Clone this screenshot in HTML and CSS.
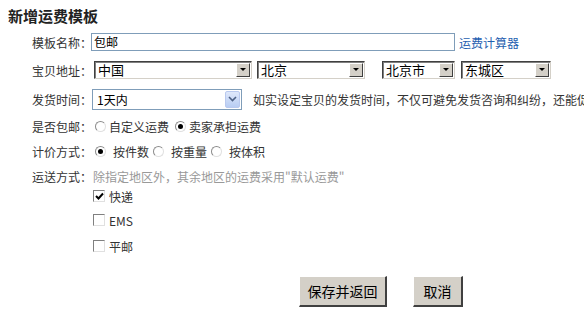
FILE: index.html
```html
<!DOCTYPE html>
<html lang="zh-CN">
<head>
    <meta charset="UTF-8">
    <title>新增运费模板</title>
    <link rel="stylesheet" href="styles.css">
</head>
<body>

    <div class="title">新增运费模板</div>

    <div class="row r1">
        <div class="label">模板名称：</div>
        <div class="text-input">包邮</div>
        <a class="calc" href="#">运费计算器</a>
    </div>

    <div class="row r2">
        <div class="label">宝贝地址：</div>
        <div class="sel s-country"><span>中国</span><i class="arrow"></i></div>
        <div class="sel s-prov"><span>北京</span><i class="arrow"></i></div>
        <div class="sel s-city"><span>北京市</span><i class="arrow"></i></div>
        <div class="sel s-area"><span>东城区</span><i class="arrow"></i></div>
    </div>

    <div class="row r3">
        <div class="label">发货时间：</div>
        <div class="xp-sel"><span>1天内</span><i class="xp-arrow"><svg width="9" height="6" viewBox="0 0 9 6"><path d="M1 1 L4.5 4.5 L8 1" fill="none" stroke="#4d6185" stroke-width="1.6"/></svg></i></div>
        <div class="hint">如实设定宝贝的发货时间，不仅可避免发货咨询和纠纷，还能促进成交！</div>
    </div>

    <div class="row r4">
        <div class="label">是否包邮：</div>
        <span class="radio"></span><span class="opt">自定义运费</span>
        <span class="radio on"></span><span class="opt">卖家承担运费</span>
    </div>

    <div class="row r5">
        <div class="label">计价方式：</div>
        <span class="radio on"></span><span class="opt wide">按件数</span>
        <span class="radio"></span><span class="opt wide">按重量</span>
        <span class="radio"></span><span class="opt wide">按体积</span>
    </div>

    <div class="row r6">
        <div class="label">运送方式：</div>
        <span class="note">除指定地区外，其余地区的运费采用"默认运费"</span>
    </div>

    <div class="checks">
        <div class="check-row c1"><span class="box on"><svg width="9" height="9" viewBox="0 0 9 9"><path d="M1 4 L3.5 6.5 L8 1.5" fill="none" stroke="#000" stroke-width="2"/></svg></span>快递</div>
        <div class="check-row c2"><span class="box"></span>EMS</div>
        <div class="check-row c3"><span class="box"></span>平邮</div>
    </div>

    <div class="actions">
        <button class="btn btn-save">保存并返回</button>
        <button class="btn btn-cancel">取消</button>
    </div>

</body>
</html>
```

FILE: styles.css
```css
body {
    margin: 0;
    padding: 8px;
    background-color: #fff;
    color: #333;
    font-family: "Noto Sans CJK SC", "Liberation Sans", sans-serif;
    font-size: 12px;
    overflow: hidden;
    white-space: nowrap;
}

.title {
    font-size: 15px;
    font-weight: bold;
    line-height: 16px;
    color: #222;
    margin-bottom: 4px;
}

.row {
    display: flex;
    align-items: center;
    height: 26px;
}

.row > * {
    flex-shrink: 0;
}

.r1, .r2 {
    height: 28px;
}

.r3 {
    height: 30px;
}

.r4 {
    height: 24px;
}

.r6 {
    height: 24px;
}

.label {
    width: 84px;
    text-align: right;
    color: #333;
}

/* text input */
.text-input {
    box-sizing: border-box;
    width: 364px;
    height: 18px;
    line-height: 16px;
    margin-left: -1px;
    padding-left: 2px;
    border: 1px solid #7f9db9;
    color: #000;
}

.calc {
    margin-left: 4px;
    color: #1f5fb0;
    text-decoration: none;
}

/* classic select */
.sel {
    box-sizing: border-box;
    display: flex;
    align-items: center;
    height: 18px;
    border-top: 1px solid #404040;
    border-left: 1px solid #404040;
    border-right: 1px solid #d4d0c8;
    border-bottom: 1px solid #d4d0c8;
    box-shadow: inset 1px 1px 0 #808080;
    color: #000;
    font-size: 13px;
}

.sel span {
    flex: 1;
    padding-left: 3px;
    line-height: 16px;
}

.arrow {
    position: relative;
    width: 14px;
    height: 14px;
    margin-right: 1px;
    box-sizing: border-box;
    background-color: #d4d0c8;
    border-top: 1px solid #fff;
    border-left: 1px solid #fff;
    border-right: 1px solid #404040;
    border-bottom: 1px solid #404040;
}

.arrow::after {
    content: "";
    position: absolute;
    left: 3px;
    top: 4px;
    border-left: 3px solid transparent;
    border-right: 3px solid transparent;
    border-top: 3px solid #000;
}

.s-country {
    width: 158px;
    margin-left: 2px;
}

.s-prov {
    width: 108px;
    margin-left: 5px;
}

.s-city {
    width: 73px;
    margin-left: 17px;
}

.s-area {
    width: 90px;
    margin-left: 6px;
}

/* xp select */
.xp-sel {
    box-sizing: border-box;
    display: flex;
    align-items: center;
    width: 150px;
    height: 21px;
    border: 1px solid #7f9db9;
    color: #000;
}

.xp-sel span {
    flex: 1;
    padding-left: 4px;
}

.xp-arrow {
    display: flex;
    align-items: center;
    justify-content: center;
    width: 15px;
    height: 17px;
    margin-right: 1px;
    border-radius: 2px;
    background: linear-gradient(#dfe8fb, #b8cdf3);
    border: 1px solid #b9c9ef;
    box-sizing: border-box;
}

.hint {
    margin-left: 11px;
    color: #333;
}

/* radios */
.radio {
    box-sizing: border-box;
    position: relative;
    width: 11px;
    height: 11px;
    border-radius: 50%;
    border: 1px solid #8c8c8c;
    border-right-color: #e0e0e0;
    border-bottom-color: #e0e0e0;
    background-color: #fff;
    margin-left: 3px;
}

.radio.on::after {
    content: "";
    position: absolute;
    left: 2px;
    top: 2px;
    width: 5px;
    height: 5px;
    border-radius: 50%;
    background-color: #000;
}

.opt {
    margin-left: 3px;
    margin-right: 3px;
    color: #333;
}

.opt.wide {
    margin-left: 7px;
    margin-right: 1px;
}

.note {
    margin-left: 1px;
    color: #999;
}

/* checkboxes */
.checks {
    padding-left: 85px;
}

.check-row {
    display: flex;
    align-items: center;
    height: 16px;
    color: #333;
}

.c2 {
    margin-top: 8px;
}

.c3 {
    margin-top: 10px;
}

.box {
    box-sizing: border-box;
    display: flex;
    align-items: center;
    justify-content: center;
    width: 12px;
    height: 12px;
    margin-right: 4px;
    border-top: 1px solid #808080;
    border-left: 1px solid #808080;
    border-right: 1px solid #e0e0e0;
    border-bottom: 1px solid #e0e0e0;
    background-color: #fff;
}

/* buttons */
.actions {
    display: flex;
    gap: 26px;
    padding-left: 291px;
    margin-top: 22px;
}

.btn {
    height: 31px;
    padding: 0;
    background-color: #d4d0c8;
    color: #000;
    font-family: "Noto Sans CJK SC", sans-serif;
    font-size: 14px;
    border-top: 1px solid #fff;
    border-left: 1px solid #fff;
    border-right: 2px solid #404040;
    border-bottom: 2px solid #404040;
}

.btn-save {
    width: 88px;
}

.btn-cancel {
    width: 50px;
}
```
